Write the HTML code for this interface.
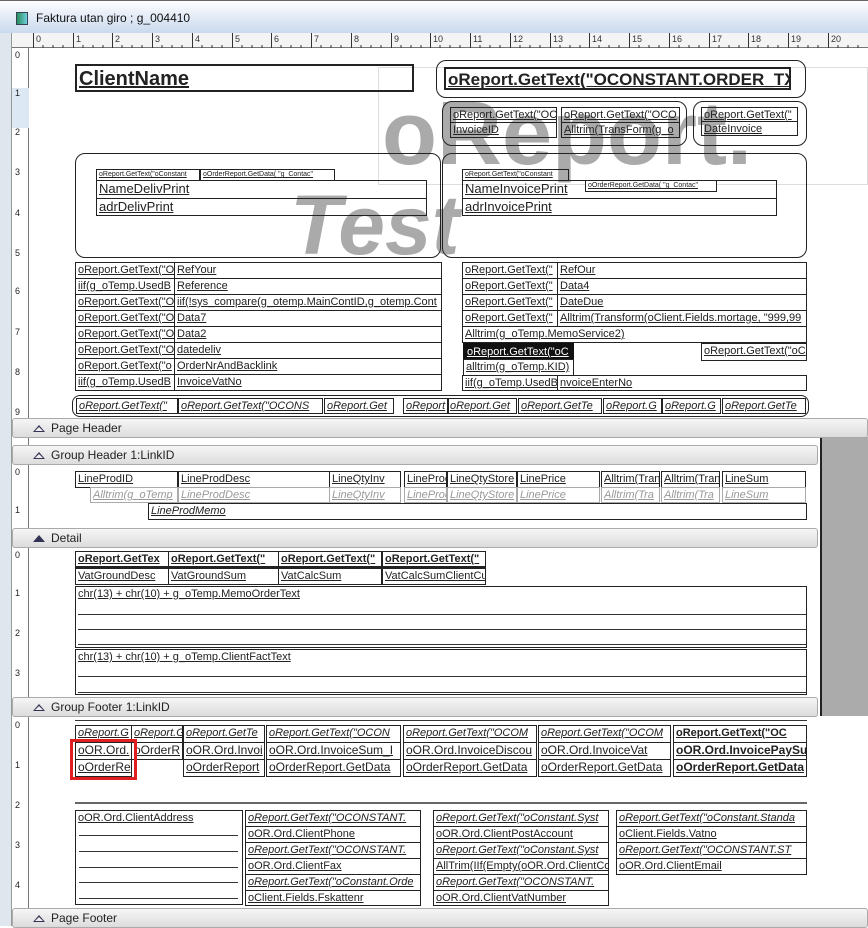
<!DOCTYPE html>
<html><head><meta charset="utf-8"><style>
*{margin:0;padding:0;box-sizing:border-box}
body{width:868px;height:926px;overflow:hidden;background:#fff;font-family:"Liberation Sans",sans-serif;position:relative}
.a{position:absolute}
.f{position:absolute;border:1px solid #222;font-size:11px;line-height:14px;white-space:nowrap;overflow:hidden;padding-left:2px;color:#222;text-decoration:underline}
.i{font-style:italic}
.b{font-weight:bold}
.g{color:#999;border-color:#aaa}
.r{position:absolute;border:1px solid #222;border-radius:10px}
.band{position:absolute;height:20px;background:linear-gradient(#f6f6f6,#dcdcdc);border:1px solid #aaa;border-radius:3px;font-size:12px;line-height:18px;padding-left:38px;color:#222}
.band:before{content:"";position:absolute;left:20px;top:6px;border-left:6px solid transparent;border-right:6px solid transparent;border-bottom:7px solid #335}
.band.o:after{content:"";position:absolute;left:22px;top:8px;border-left:4px solid transparent;border-right:4px solid transparent;border-bottom:4px solid #eee}
.ln{position:absolute;height:1px;background:#333}
.vr{position:absolute;left:12px;width:17px;font-size:9px;color:#222;padding-left:3px}
</style></head><body>
<!-- title bar -->
<div class="a" style="left:0;top:0;width:868px;height:33px;background:linear-gradient(#fdfdfe,#c9d9ee);border-top:1px solid #666"></div>
<div class="a" style="left:16px;top:12px;width:12px;height:13px;background:linear-gradient(90deg,#2a8a5a,#6fd0e0);border:1px solid #345"></div>
<div class="a" style="left:36px;top:11px;font-size:12px;color:#111">Faktura utan giro ; g_004410</div>
<!-- left frame -->
<div class="a" style="left:0;top:33px;width:12px;height:893px;background:#dfe6ee;border-right:1px solid #999"></div>
<!-- horizontal ruler -->
<div class="a" style="left:12px;top:33px;width:856px;height:15px;background:#f4f4f4;border-bottom:1px solid #777"></div>
<svg class="a" style="left:0;top:33px" width="868" height="15">
<g stroke="#333" stroke-width="1">
<path d="M33.5 0V15M73.5 0V15M112.5 0V15M152.5 0V15M192.5 0V15M232.5 0V15M271.5 0V15M311.5 0V15M351.5 0V15M391.5 0V15M430.5 0V15M470.5 0V15M510.5 0V15M550.5 0V15M589.5 0V15M629.5 0V15M669.5 0V15M709.5 0V15M748.5 0V15M788.5 0V15M828.5 0V15"/>
</g>
<g fill="#333" font-size="9" font-family="Liberation Sans">
<text x="36" y="9">0</text><text x="76" y="9">1</text><text x="115" y="9">2</text><text x="155" y="9">3</text><text x="195" y="9">4</text><text x="235" y="9">5</text><text x="274" y="9">6</text><text x="314" y="9">7</text><text x="354" y="9">8</text><text x="394" y="9">9</text><text x="433" y="9">10</text><text x="473" y="9">11</text><text x="513" y="9">12</text><text x="553" y="9">13</text><text x="592" y="9">14</text><text x="632" y="9">15</text><text x="672" y="9">16</text><text x="712" y="9">17</text><text x="751" y="9">18</text><text x="791" y="9">19</text><text x="831" y="9">20</text>
</g>
<path d="M43 12v3M53 12v3M63 12v3M83 12v3M93 12v3M103 12v3M122 12v3M132 12v3M142 12v3M162 12v3M172 12v3M182 12v3M202 12v3M212 12v3M222 12v3M242 12v3M252 12v3M262 12v3M281 12v3M291 12v3M301 12v3M321 12v3M331 12v3M341 12v3M361 12v3M371 12v3M381 12v3M401 12v3M411 12v3M421 12v3M440 12v3M450 12v3M460 12v3M480 12v3M490 12v3M500 12v3M520 12v3M530 12v3M540 12v3M560 12v3M570 12v3M580 12v3M599 12v3M609 12v3M619 12v3M639 12v3M649 12v3M659 12v3M679 12v3M689 12v3M699 12v3M719 12v3M729 12v3M739 12v3M758 12v3M768 12v3M778 12v3M798 12v3M808 12v3M818 12v3M838 12v3M848 12v3M858 12v3" stroke="#333"/>
</svg>
<!-- vertical ruler -->
<div class="a" style="left:12px;top:48px;width:17px;height:878px;background:#fff;border-right:1px solid #777"></div>
<div class="a" style="left:12px;top:88px;width:17px;height:40px;background:#dde8f5"></div>
<div class="vr" style="top:50px">0</div><div class="vr" style="top:88px">1</div><div class="vr" style="top:127px">2</div><div class="vr" style="top:167px">3</div><div class="vr" style="top:208px">4</div><div class="vr" style="top:248px">5</div><div class="vr" style="top:286px">6</div><div class="vr" style="top:327px">7</div><div class="vr" style="top:367px">8</div><div class="vr" style="top:407px">9</div>
<div class="vr" style="top:467px">0</div><div class="vr" style="top:505px">1</div>
<div class="vr" style="top:550px">0</div><div class="vr" style="top:588px">1</div><div class="vr" style="top:628px">2</div><div class="vr" style="top:668px">3</div>
<div class="vr" style="top:720px">0</div><div class="vr" style="top:760px">1</div><div class="vr" style="top:800px">2</div><div class="vr" style="top:840px">3</div><div class="vr" style="top:880px">4</div>

<!-- gray right area -->
<div class="a" style="left:820px;top:437px;width:48px;height:279px;background:#ababab;border-left:2px solid #222"></div>

<!-- watermark -->
<div class="a" style="left:378px;top:67px;width:490px;height:118px;border:1px solid #ddd"></div>
<div class="a" style="left:382px;top:84px;font-size:90px;line-height:100px;font-weight:bold;color:#aaa">oReport.</div>
<div class="a" style="left:290px;top:180px;font-size:84px;line-height:90px;font-weight:bold;font-style:italic;color:#aaa">Test</div>

<!-- report header -->
<div class="f b" style="left:75px;top:64px;width:339px;height:28px;font-size:20px;line-height:26px;border-width:2px">ClientName</div>
<div class="r" style="left:436px;top:60px;width:370px;height:38px"></div>
<div class="f b" style="left:444px;top:67px;width:347px;height:23px;font-size:17px;line-height:21px;border-width:2px">oReport.GetText("OCONSTANT.ORDER_TX</div>
<div class="r" style="left:442px;top:101px;width:245px;height:45px"></div>
<div class="f" style="left:450px;top:107px;width:107px;height:16px">oReport.GetText("OC</div>
<div class="f" style="left:450px;top:122px;width:107px;height:16px">InvoiceID</div>
<div class="f" style="left:561px;top:107px;width:119px;height:16px">oReport.GetText("OCO</div>
<div class="f" style="left:561px;top:122px;width:119px;height:16px">Alltrim(TransForm(g_o</div>
<div class="r" style="left:693px;top:101px;width:114px;height:45px"></div>
<div class="f" style="left:701px;top:107px;width:97px;height:15px">oReport.GetText("</div>
<div class="f" style="left:701px;top:121px;width:97px;height:15px">DateInvoice</div>

<div class="r" style="left:75px;top:153px;width:366px;height:105px"></div>
<div class="f" style="left:96px;top:169px;width:104px;height:12px;font-size:7px;line-height:10px">oReport.GetText("oConstant</div>
<div class="f" style="left:200px;top:169px;width:135px;height:12px;font-size:7px;line-height:10px">oOrderReport.GetData( "g_Contac"</div>
<div class="f" style="left:96px;top:180px;width:331px;height:19px;font-size:13px;line-height:16px">NameDelivPrint</div>
<div class="f" style="left:96px;top:198px;width:331px;height:18px;font-size:13px;line-height:16px">adrDelivPrint</div>
<div class="r" style="left:442px;top:153px;width:365px;height:105px"></div>
<div class="f" style="left:462px;top:169px;width:107px;height:12px;font-size:7px;line-height:10px">oReport.GetText("oConstant</div>
<div class="f" style="left:462px;top:180px;width:315px;height:19px;font-size:13px;line-height:16px">NameInvoicePrint</div>
<div class="f" style="left:585px;top:180px;width:132px;height:12px;font-size:7px;line-height:10px;background:#fff">oOrderReport.GetData( "g_Contac"</div>
<div class="f" style="left:462px;top:198px;width:315px;height:18px;font-size:13px;line-height:16px">adrInvoicePrint</div>

<!-- left rows -->
<div class="f" style="left:75px;top:262px;width:100px;height:17px">oReport.GetText("O</div><div class="f" style="left:174px;top:262px;width:268px;height:17px">RefYour</div>
<div class="f" style="left:75px;top:278px;width:100px;height:17px">iif(g_oTemp.UsedB</div><div class="f" style="left:174px;top:278px;width:268px;height:17px">Reference</div>
<div class="f" style="left:75px;top:294px;width:100px;height:17px">oReport.GetText("O</div><div class="f" style="left:174px;top:294px;width:268px;height:17px">iif(!sys_compare(g_otemp.MainContID,g_otemp.Cont</div>
<div class="f" style="left:75px;top:310px;width:100px;height:17px">oReport.GetText("O</div><div class="f" style="left:174px;top:310px;width:268px;height:17px">Data7</div>
<div class="f" style="left:75px;top:326px;width:100px;height:17px">oReport.GetText("O</div><div class="f" style="left:174px;top:326px;width:268px;height:17px">Data2</div>
<div class="f" style="left:75px;top:342px;width:100px;height:17px">oReport.GetText("O</div><div class="f" style="left:174px;top:342px;width:268px;height:17px">datedeliv</div>
<div class="f" style="left:75px;top:358px;width:100px;height:17px">oReport.GetText("o</div><div class="f" style="left:174px;top:358px;width:268px;height:17px">OrderNrAndBacklink</div>
<div class="f" style="left:75px;top:374px;width:100px;height:17px">iif(g_oTemp.UsedB</div><div class="f" style="left:174px;top:374px;width:268px;height:17px">InvoiceVatNo</div>
<!-- right rows -->
<div class="f" style="left:462px;top:262px;width:96px;height:17px">oReport.GetText("</div><div class="f" style="left:557px;top:262px;width:250px;height:17px">RefOur</div>
<div class="f" style="left:462px;top:278px;width:96px;height:17px">oReport.GetText("</div><div class="f" style="left:557px;top:278px;width:250px;height:17px">Data4</div>
<div class="f" style="left:462px;top:294px;width:96px;height:17px">oReport.GetText("</div><div class="f" style="left:557px;top:294px;width:250px;height:17px">DateDue</div>
<div class="f" style="left:462px;top:310px;width:96px;height:17px">oReport.GetText("</div><div class="f" style="left:557px;top:310px;width:250px;height:17px">Alltrim(Transform(oClient.Fields.mortage, "999,99</div>
<div class="f" style="left:462px;top:326px;width:345px;height:17px">Alltrim(g_oTemp.MemoService2)</div>
<div class="f" style="left:463px;top:343px;width:111px;height:17px;background:#111;color:#fff;border:2px solid #111">oReport.GetText("oC</div>
<div class="f" style="left:701px;top:343px;width:106px;height:18px">oReport.GetText("oC</div>
<div class="f" style="left:463px;top:359px;width:111px;height:17px">alltrim(g_oTemp.KID)</div>
<div class="f" style="left:462px;top:375px;width:96px;height:16px">iif(g_oTemp.UsedB</div><div class="f" style="left:557px;top:375px;width:250px;height:16px">nvoiceEnterNo</div>
<!-- italic row -->
<div class="r" style="left:72px;top:395px;width:737px;height:22px;border-radius:8px"></div>
<div class="f i" style="left:76px;top:398px;width:102px;height:16px">oReport.GetText("</div>
<div class="f i" style="left:178px;top:398px;width:145px;height:16px">oReport.GetText("OCONS</div>
<div class="f i" style="left:324px;top:398px;width:70px;height:16px">oReport.Get</div>
<div class="f i" style="left:403px;top:398px;width:46px;height:16px">oReport</div>
<div class="f i" style="left:447px;top:398px;width:70px;height:16px">oReport.Get</div>
<div class="f i" style="left:518px;top:398px;width:84px;height:16px">oReport.GetTe</div>
<div class="f i" style="left:603px;top:398px;width:59px;height:16px">oReport.G</div>
<div class="f i" style="left:662px;top:398px;width:59px;height:16px">oReport.G</div>
<div class="f i" style="left:722px;top:398px;width:84px;height:16px">oReport.GetTe</div>

<div class="band o" style="left:12px;top:418px;width:856px">Page Header</div>
<div class="band o" style="left:12px;top:445px;width:806px">Group Header 1:LinkID</div>

<!-- group header -->
<div class="f" style="left:75px;top:471px;width:103px;height:17px">LineProdID</div>
<div class="f" style="left:178px;top:471px;width:152px;height:17px">LineProdDesc</div>
<div class="f" style="left:329px;top:471px;width:72px;height:17px">LineQtyInv</div>
<div class="f" style="left:404px;top:471px;width:43px;height:17px">LineProdID</div>
<div class="f" style="left:447px;top:471px;width:70px;height:17px">LineQtyStore</div>
<div class="f" style="left:517px;top:471px;width:83px;height:17px">LinePrice</div>
<div class="f" style="left:601px;top:471px;width:59px;height:17px">Alltrim(Tran</div>
<div class="f" style="left:661px;top:471px;width:59px;height:17px">Alltrim(Tran</div>
<div class="f" style="left:722px;top:471px;width:84px;height:17px">LineSum</div>
<div class="f i g" style="left:90px;top:487px;width:88px;height:16px">Alltrim(g_oTemp</div>
<div class="f i g" style="left:178px;top:487px;width:152px;height:16px">LineProdDesc</div>
<div class="f i g" style="left:329px;top:487px;width:72px;height:16px">LineQtyInv</div>
<div class="f i g" style="left:404px;top:487px;width:43px;height:16px">LineProd</div>
<div class="f i g" style="left:447px;top:487px;width:70px;height:16px">LineQtyStore</div>
<div class="f i g" style="left:517px;top:487px;width:83px;height:16px">LinePrice</div>
<div class="f i g" style="left:601px;top:487px;width:59px;height:16px">Alltrim(Tra</div>
<div class="f i g" style="left:661px;top:487px;width:59px;height:16px">Alltrim(Tra</div>
<div class="f i g" style="left:722px;top:487px;width:84px;height:16px">LineSum</div>
<div class="f i" style="left:148px;top:503px;width:659px;height:17px">LineProdMemo</div>

<div class="band" style="left:12px;top:528px;width:806px">Detail</div>

<!-- detail -->
<div class="f b" style="left:75px;top:551px;width:94px;height:18px;border-bottom-width:3px">oReport.GetTex</div>
<div class="f b" style="left:168px;top:551px;width:111px;height:18px;border-bottom-width:3px">oReport.GetText("</div>
<div class="f b" style="left:278px;top:551px;width:104px;height:18px;border-bottom-width:3px">oReport.GetText("</div>
<div class="f b" style="left:382px;top:551px;width:104px;height:18px;border-bottom-width:3px">oReport.GetText("</div>
<div class="f" style="left:75px;top:568px;width:94px;height:17px">VatGroundDesc</div>
<div class="f" style="left:168px;top:568px;width:111px;height:17px">VatGroundSum</div>
<div class="f" style="left:278px;top:568px;width:104px;height:17px">VatCalcSum</div>
<div class="f" style="left:382px;top:568px;width:104px;height:17px">VatCalcSumClientCu</div>
<div class="f" style="left:75px;top:586px;width:732px;height:62px">chr(13) + chr(10) + g_oTemp.MemoOrderText</div>
<div class="ln" style="left:78px;top:614px;width:728px"></div><div class="ln" style="left:78px;top:629px;width:728px"></div><div class="ln" style="left:78px;top:644px;width:728px"></div>
<div class="f" style="left:75px;top:649px;width:732px;height:46px">chr(13) + chr(10) + g_oTemp.ClientFactText</div>
<div class="ln" style="left:78px;top:676px;width:728px"></div><div class="ln" style="left:78px;top:692px;width:728px"></div>

<div class="band o" style="left:12px;top:697px;width:806px">Group Footer 1:LinkID</div>

<!-- group footer -->
<div class="ln" style="left:75px;top:720px;width:732px"></div>
<div class="f i" style="left:75px;top:725px;width:57px;height:18px">oReport.G</div>
<div class="f i" style="left:131px;top:725px;width:52px;height:18px">oReport.G</div>
<div class="f i" style="left:183px;top:725px;width:82px;height:18px">oReport.GetTe</div>
<div class="f i" style="left:266px;top:725px;width:135px;height:18px">oReport.GetText("OCON</div>
<div class="f i" style="left:403px;top:725px;width:134px;height:18px">oReport.GetText("OCOM</div>
<div class="f i" style="left:538px;top:725px;width:133px;height:18px">oReport.GetText("OCOM</div>
<div class="f b" style="left:673px;top:725px;width:134px;height:18px">oReport.GetText("OC</div>
<div class="f" style="left:75px;top:742px;width:57px;height:18px;font-size:12px">oOR.Ord.</div>
<div class="f" style="left:131px;top:742px;width:52px;height:18px;font-size:12px">oOrderR</div>
<div class="f" style="left:183px;top:742px;width:82px;height:18px;font-size:12px">oOR.Ord.Invoi</div>
<div class="f" style="left:266px;top:742px;width:135px;height:18px;font-size:12px">oOR.Ord.InvoiceSum_I</div>
<div class="f" style="left:403px;top:742px;width:134px;height:18px;font-size:12px">oOR.Ord.InvoiceDiscou</div>
<div class="f" style="left:538px;top:742px;width:133px;height:18px;font-size:12px">oOR.Ord.InvoiceVat</div>
<div class="f b" style="left:673px;top:742px;width:134px;height:18px;font-size:12px">oOR.Ord.InvoicePaySu</div>
<div class="f" style="left:75px;top:759px;width:57px;height:18px;font-size:12px">oOrderRe</div>
<div class="f" style="left:183px;top:759px;width:82px;height:18px;font-size:12px">oOrderReport</div>
<div class="f" style="left:266px;top:759px;width:135px;height:18px;font-size:12px">oOrderReport.GetData</div>
<div class="f" style="left:403px;top:759px;width:134px;height:18px;font-size:12px">oOrderReport.GetData</div>
<div class="f" style="left:538px;top:759px;width:133px;height:18px;font-size:12px">oOrderReport.GetData</div>
<div class="f b" style="left:673px;top:759px;width:134px;height:18px;font-size:12px">oOrderReport.GetData</div>
<div class="a" style="left:70px;top:739px;width:67px;height:41px;border:3px solid #e02020"></div>

<div class="a" style="left:75px;top:802px;width:732px;height:2px;background:#666"></div>
<div class="f" style="left:75px;top:810px;width:168px;height:95px">oOR.Ord.ClientAddress</div>
<div class="ln" style="left:79px;top:835px;width:159px"></div><div class="ln" style="left:79px;top:851px;width:159px"></div><div class="ln" style="left:79px;top:867px;width:159px"></div><div class="ln" style="left:79px;top:882px;width:159px"></div><div class="ln" style="left:79px;top:898px;width:159px"></div>
<div class="f i" style="left:245px;top:810px;width:176px;height:17px">oReport.GetText("OCONSTANT.</div>
<div class="f" style="left:245px;top:826px;width:176px;height:17px">oOR.Ord.ClientPhone</div>
<div class="f i" style="left:245px;top:842px;width:176px;height:17px">oReport.GetText("OCONSTANT.</div>
<div class="f" style="left:245px;top:858px;width:176px;height:17px">oOR.Ord.ClientFax</div>
<div class="f i" style="left:245px;top:874px;width:176px;height:17px">oReport.GetText("oConstant.Orde</div>
<div class="f" style="left:245px;top:890px;width:176px;height:16px">oClient.Fields.Fskattenr</div>
<div class="f i" style="left:433px;top:810px;width:176px;height:17px">oReport.GetText("oConstant.Syst</div>
<div class="f" style="left:433px;top:826px;width:176px;height:17px">oOR.Ord.ClientPostAccount</div>
<div class="f i" style="left:433px;top:842px;width:176px;height:17px">oReport.GetText("oConstant.Syst</div>
<div class="f" style="left:433px;top:858px;width:176px;height:17px">AllTrim(IIf(Empty(oOR.Ord.ClientCo</div>
<div class="f i" style="left:433px;top:874px;width:176px;height:17px">oReport.GetText("OCONSTANT.</div>
<div class="f" style="left:433px;top:890px;width:176px;height:16px">oOR.Ord.ClientVatNumber</div>
<div class="f i" style="left:616px;top:810px;width:191px;height:17px">oReport.GetText("oConstant.Standa</div>
<div class="f" style="left:616px;top:826px;width:191px;height:17px">oClient.Fields.Vatno</div>
<div class="f i" style="left:616px;top:842px;width:191px;height:17px">oReport.GetText("OCONSTANT.ST</div>
<div class="f" style="left:616px;top:858px;width:191px;height:17px">oOR.Ord.ClientEmail</div>

<div class="band o" style="left:12px;top:908px;width:856px">Page Footer</div>
</body></html>
